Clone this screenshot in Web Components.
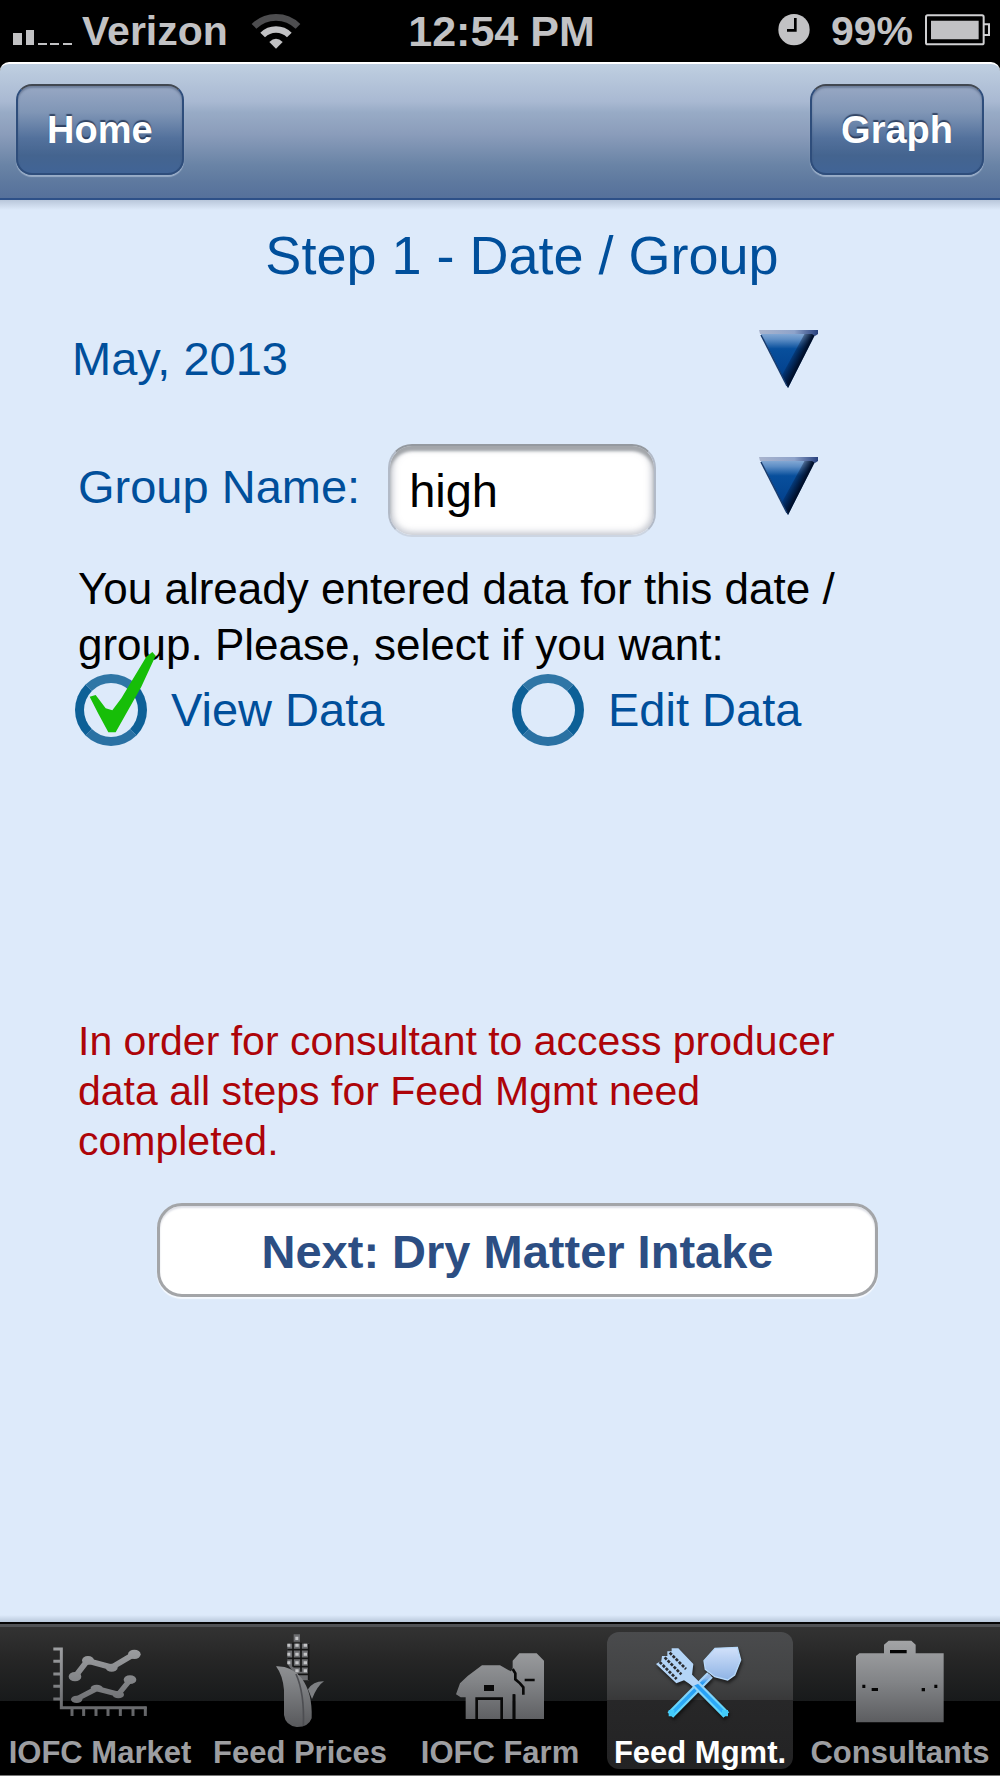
<!DOCTYPE html>
<html lang="en">
<head>
<meta charset="utf-8">
<meta name="viewport" content="width=device-width, initial-scale=1">
<title>Feed Mgmt.</title>
<style>
  html, body { margin: 0; background: #fff; }
  body { font-family: "Liberation Sans", Arial, Helvetica, sans-serif; }
</style>
</head>
<body>
<feed-app></feed-app>

<script>
const define = (name, html, setup) => {
  customElements.define(name, class extends HTMLElement {
    constructor() {
      super();
      this.attachShadow({ mode: "open" }).innerHTML = html;
    }
    connectedCallback() { if (setup) setup(this, this.shadowRoot); }
  });
};

define("status-bar", `
  <style>
    :host { display: grid; grid-template-columns: 1fr auto 1fr; align-items: center; background: #000; color: #c2c2c4; font-weight: 700; font-size: 41px; line-height: 62px; height: 62px; padding: 0 10px 0 13px; white-space: nowrap; }
    .side { display: flex; align-items: center; }
    .end { justify-content: flex-end; }
    .time { font-size: 43px; }
    .pct { margin: 0 12px 0 21px; }
    .carrier { margin: 0 23px 0 9px; }
    svg { display: block; height: 62px; flex: none; }
  </style>
  <div class="side">
    <svg width="60" viewBox="13 0 60 62" fill="#c2c2c4" aria-hidden="true"><path d="M13 33h9v12h-9zM26 30h8v15h-8zM38 43h9v2h-9zM50 43h9v2h-9zM63 43h9v2h-9z"/></svg>
    <span class="carrier">Verizon</span>
    <svg width="50" viewBox="750 0 150 186" aria-hidden="true"><path d="M759 79A94 94 0 0 1 891 79" fill="none" stroke="#4d4d4f" stroke-width="20"/><path d="M785 105A57 57 0 0 1 865 105" fill="none" stroke="#c2c2c4" stroke-width="20"/><path d="M805 126Q825 106 845 126L825 146z" fill="#c2c2c4"/></svg>
  </div>
  <span class="time">12:54 PM</span>
  <div class="side end">
    <svg width="32" viewBox="834 0 96 186" aria-hidden="true"><circle cx="882" cy="89" r="47" fill="#c2c2c4"/><path d="M886 54V91H861" fill="none" stroke="#000" stroke-width="8"/></svg>
    <span class="pct">99%</span>
    <svg width="65" viewBox="1275 0 195 186" aria-hidden="true"><rect x="1278" y="46" width="173" height="87" rx="5" fill="none" stroke="#d0d0d2" stroke-width="6"/><path d="M1293 62h143v56h-143z" fill="#c2c2c4"/><path d="M1452 73h15v32h-15" fill="none" stroke="#d0d0d2" stroke-width="6"/></svg>
  </div>`);

define("nav-button", `
  <style>
    :host { display: block; }
    button { display: block; height: 91px; padding: 1px 29px 0; border: 2px solid #2e4d7b; border-top-color: #414750; border-radius: 16px; color: #fff; font: 700 38px/86px "Liberation Sans", Arial, sans-serif; text-shadow: 0 -2px 1px rgba(30,45,75,.75); background: linear-gradient(#98a8c4, #8096b6 30%, #53719c 60%, #44648f 80%, #416496); box-shadow: 0 2px 1px rgba(190,205,225,.6), inset 0 2px 2px rgba(60,75,105,.45); }
  </style>
  <button type="button"><slot></slot></button>`);

define("nav-bar", `
  <style>
    :host { display: block; background: #000; }
    nav { box-sizing: border-box; height: 138px; display: flex; justify-content: space-between; align-items: flex-start; padding: 20px 16px 0; border-top: 2px solid #fff; border-bottom: 2px solid #2d5088; border-radius: 9px 9px 0 0; background: linear-gradient(#bfcfe1, #a9b9d2 28%, #98abc6 36%, #8b9dbb 52%, #6a84a6 75%, #5e799f 88%, #56719b); }
  </style>
  <nav><slot></slot></nav>`);

/* Glossy down-pointing arrow shared by both pickers */
const arrow = `<svg class="arrow" width="60" height="60" viewBox="0 0 60 60" aria-hidden="true">
  <defs>
    <linearGradient id="f" x1="0" y1="0" x2="0" y2="1"><stop offset="0" stop-color="#8fb0d8"/><stop offset=".13" stop-color="#5f8fc6"/><stop offset=".3" stop-color="#084f9c"/><stop offset="1" stop-color="#003a86"/></linearGradient>
    <linearGradient id="s" gradientUnits="userSpaceOnUse" x1="30" y1="26" x2="44" y2="33"><stop offset="0" stop-color="#001030" stop-opacity="0"/><stop offset=".8" stop-color="#00102c"/></linearGradient>
    <linearGradient id="e"><stop offset="0" stop-color="#a9b4cd"/><stop offset=".6" stop-color="#8ea3ca"/><stop offset="1" stop-color="#27407d"/></linearGradient>
  </defs>
  <path d="M1 3H57L29 59z" fill="url(#f)"/><path d="M46 4H57L29 59L23 46z" fill="url(#s)"/><path d="M2 6L28 57" stroke="#173a6c" stroke-width="1.5"/><path d="M0 1H59V5L56 7L53 5H1z" fill="url(#e)"/>
</svg>`;

define("date-picker", `
  <style>
    :host { display: flex; height: 84px; align-items: center; padding: 0 181px 0 72px; }
    select { appearance: none; flex: 1; min-width: 0; margin: 0; padding: 0; border: 0; background: none; color: #004f9b; font: 47px/60px "Liberation Sans", Arial, sans-serif; }
    .arrow { flex: none; pointer-events: none; margin-left: -60px; }
  </style>
  <select aria-label="Month"><option>May, 2013</option></select>${arrow}`);

define("group-field", `
  <style>
    :host { display: flex; align-items: flex-start; padding: 0 181px 0 78px; }
    label { color: #004f9b; font-size: 47px; line-height: 86px; white-space: nowrap; margin-right: 28px; }
    input { box-sizing: border-box; width: 268px; min-width: 0; height: 93px; margin: 0; padding: 0 19px; border: 2px solid; border-color: #94999f #b2bac7 #ccd5e2; border-radius: 24px; background: #fff; color: #000; font: 47px/60px "Liberation Sans", Arial, sans-serif; box-shadow: inset 0 5px 3px #a3a6aa, inset 0 0 6px 3px rgba(150,155,170,.55); }
    button { display: flex; align-items: center; height: 84px; margin: 0 0 0 auto; padding: 0; border: 0; background: none; }
  </style>
  <label for="group">Group Name:</label>
  <input id="group" type="text" value="high">
  <button type="button" aria-label="Choose group">${arrow}</button>`);

const tick = `<svg width="82" height="96" viewBox="226 295 246 288" aria-hidden="true"><path d="M270 435L288 430L318 470L338 476L365 440L440 315L458 301L468 312L425 405L348 542L326 542L296 486z" fill="#17be08"/></svg>`;

define("mode-choice", `
  <style>
    :host { display: grid; grid-template-columns: 1fr 1fr; padding: 0 51px 0 75px; }
    label { display: flex; align-items: center; gap: 24px; height: 74px; color: #004f9b; font-size: 47px; line-height: 60px; }
    .dot { position: relative; display: block; width: 72px; height: 72px; flex: none; }
    input { appearance: none; box-sizing: border-box; display: block; width: 72px; height: 72px; margin: 0; border: 9px solid; border-color: #2f76a6 #0d6097 #2a71a3; border-radius: 50%; }
    /* The tick rises out of the ring and over the text above it */
    svg { position: absolute; left: 0; bottom: 0; display: none; pointer-events: none; }
    input:checked + svg { display: block; }
  </style>
  <label><span class="dot"><input type="radio" name="mode" checked>${tick}</span>View Data</label>
  <label><span class="dot"><input type="radio" name="mode">${tick}</span>Edit Data</label>`);

define("next-button", `
  <style>
    :host { display: block; padding: 0 122px 0 157px; }
    button { display: block; width: 100%; height: 94px; margin: 0; padding: 4px 0 0; border: 3px solid #a3a5a8; border-radius: 25px; background: #fff; color: #2c4e83; font: 700 47px/84px "Liberation Sans", Arial, sans-serif; box-shadow: 0 2px 1px #f6faff, inset 0 2px 2px #dddfe6; }
  </style>
  <button type="button"><slot></slot></button>`);

const grey = `<linearGradient id="g" gradientUnits="userSpaceOnUse" x1="0" y1="110" x2="0" y2="380"><stop offset="0" stop-color="#a6a7a9"/><stop offset=".5" stop-color="#828487"/><stop offset="1" stop-color="#58595c"/></linearGradient>`;
const icons = {
  chart: ["150 96 300 300", `<g fill="none" stroke="url(#g)" stroke-width="9"><path d="M160 147H184V323H440"/><path d="M160 184H184M160 222H184M160 259H184M160 297H184"/><path d="M216 323V348M251 323V348M288 323V348M324 323V348M361 323V348M399 323V348M436 320V348"/><path d="M225 230L262 182L335 202L403 162" stroke-width="17"/><path d="M230 297L290 266L355 283L390 240" stroke-width="16"/></g><g fill="url(#g)"><ellipse cx="225" cy="230" rx="19" ry="14"/><ellipse cx="264" cy="181" rx="18" ry="13"/><ellipse cx="335" cy="203" rx="18" ry="12"/><ellipse cx="403" cy="163" rx="19" ry="14"/><ellipse cx="230" cy="298" rx="17" ry="11"/><ellipse cx="290" cy="264" rx="18" ry="10"/><ellipse cx="355" cy="284" rx="17" ry="11"/><ellipse cx="390" cy="239" rx="19" ry="13"/></g>`],
  corn: ["750 96 300 300", `<path d="M881 103h19v22h-19zM862 131h65v110h-30l-35-50z" fill="#6b6c6f"/><path d="M862 131h9v9h-9zM886 131h10v9h-10zM911 131h10v9h-10zM862 158h9v9h-9zM886 158h10v9h-10zM911 158h10v9h-10zM862 184h9v9h-9zM886 184h10v9h-10zM911 184h10v9h-10zM886 208h10v9h-10zM911 208h10v9h-10zM886 110h9v10h-9z" fill="#c3c4c6"/><path d="M879 128V200M903 128V215M926 132V240M862 149H927M862 175H927M880 200H927M893 223H925" stroke="#141414" stroke-width="5" fill="none"/><path d="M828 199Q875 197 905 235Q938 280 935 355Q925 382 890 381Q856 376 852 345V270Q848 225 828 199z" fill="url(#g)"/><path d="M888 222Q914 280 910 378" stroke="#4d4e52" stroke-width="5" fill="none"/><path d="M924 268Q940 243 972 244Q952 257 936 297z" fill="#7d7f82"/>`],
  farm: ["150 96 300 300", `<path d="M338 205V182L358 160H410L432 182V357H346V285L330 220z" fill="url(#g)"/><path d="M168 283L180 250L203 228L246 196H300L343 220L372 262V283H338V357H197V292H182z" fill="url(#g)"/><path d="M338 207L346 220V238L360 250L370 262V284M342 283V357M230 357V296H305V357M374 240H404" fill="none" stroke="#090909" stroke-width="8"/><path d="M252 255h30v18h-30z" fill="#090909"/>`],
  tools: ["150 96 300 300", `<defs><linearGradient id="b" gradientUnits="userSpaceOnUse" x1="0" y1="140" x2="0" y2="350"><stop offset="0" stop-color="#d3e2fb"/><stop offset=".45" stop-color="#92b6e6"/><stop offset=".52" stop-color="#249af5"/><stop offset="1" stop-color="#2fb4fb"/></linearGradient><linearGradient id="o" gradientUnits="userSpaceOnUse" x1="0" y1="140" x2="0" y2="350"><stop offset="0" stop-color="#d3e6fb"/><stop offset=".45" stop-color="#a6d2f8"/><stop offset="1" stop-color="#4fd6fb"/></linearGradient></defs><g filter="drop-shadow(3px 8px 5px rgba(0,0,0,.55))"><path d="M211 345L330 225" stroke="url(#o)" stroke-width="24"/><path d="M219 337L330 225" stroke="url(#b)" stroke-width="11"/><path d="M312 182L345 145L412 142L422 180L404 225L383 240L344 230L316 208z" fill="url(#b)" stroke="#b8d9fa" stroke-width="4"/><path d="M250 215L379 345" stroke="url(#o)" stroke-width="24"/><path d="M250 215L371 337" stroke="url(#b)" stroke-width="11"/><path d="M215 145L235 145L280 192L276 226L300 250L278 258L252 241L229 250L168 192L184 182L186 168L202 168L202 154L215 154z" fill="#b4d5f7"/><path d="M179 186L230 237M194 172L244 223M209 158L258 207" stroke="#2b2d31" stroke-width="8" stroke-dasharray="9 4"/></g><path d="M206 330h17v19h-17zM366 330h18v19h-18z" fill="#42cbfa"/>`],
  briefcase: ["750 96 300 300", `<path d="M768 168L778 160H852V134L866 122H934L947 134V160H1031V367H768z" fill="url(#g)"/><path d="M870 150h50v10h-50zM787 254h9v10h-9zM815 264h19v9h-19zM965 264h10v10h-10zM1003 254h9v10h-9z" fill="#050505"/>`]
};

define("tab-item", `
  <style>
    :host { display: block; flex: 1 1 0; min-width: 0; }
    a { display: flex; flex-direction: column; align-items: center; gap: 3px; height: 137px; margin: 0 7px; border-radius: 12px; color: #9d9ea1; text-decoration: none; font-weight: 700; font-size: 31px; line-height: 34px; white-space: nowrap; }
    span { padding-top: 1px; }
    :host([selected]) a { color: #fff; background: linear-gradient(#4a4b4d, #424344 35%, #383839 50%, #272728 50%, #232324); }
    svg { display: block; flex: none; }
  </style>
  <a href="#"><svg width="100" height="100" aria-hidden="true"></svg><span><slot></slot></span></a>`,
  (host, root) => {
    const [box, art] = icons[host.getAttribute("icon")];
    const svg = root.querySelector("svg");
    svg.setAttribute("viewBox", box);
    svg.innerHTML = `<defs>${grey}</defs>` + art;
    if (host.hasAttribute("selected")) root.querySelector("a").setAttribute("aria-current", "page");
  });

define("tab-bar", `
  <style>
    :host { display: block; }
    nav { display: flex; padding: 8px 0 6px; border-top: 2px solid #050505; border-bottom: 1px solid #777; background: linear-gradient(#505255 0 3px, #333 3px, #262626 35px, #181a1b 77px, #000 77px); }
  </style>
  <nav><slot></slot></nav>`);

define("feed-app", `
  <style>
    :host { display: flex; flex-direction: column; box-sizing: border-box; min-height: 100vh; padding-bottom: 2px; }
    main { flex: 1; display: flex; flex-direction: column; background: linear-gradient(#b9c7da, #ddeafa 10px calc(100% - 7px), #b9c8db); }
    h1 { margin: 23px 0 30px; padding-left: 44px; text-align: center; color: #004f9b; font-weight: 400; font-size: 54px; line-height: 64px; }
    group-field { margin-top: 43px; }
    p { margin: 0; padding: 0 130px 0 78px; }
    .info { margin-top: 24px; font-size: 44px; line-height: 56px; }
    .notice { margin: 269px 0 37px; color: #ad0409; font-size: 41px; line-height: 50px; }
  </style>
  <status-bar></status-bar>
  <nav-bar><nav-button>Home</nav-button><nav-button>Graph</nav-button></nav-bar>
  <main>
    <h1>Step 1 - Date / Group</h1>
    <date-picker></date-picker>
    <group-field></group-field>
    <p class="info">You already entered data for this date / group. Please, select if you want:</p>
    <mode-choice></mode-choice>
    <p class="notice">In order for consultant to access producer data all steps for Feed Mgmt need completed.</p>
    <next-button>Next: Dry Matter Intake</next-button>
  </main>
  <tab-bar>
    <tab-item icon="chart">IOFC Market</tab-item>
    <tab-item icon="corn">Feed Prices</tab-item>
    <tab-item icon="farm">IOFC Farm</tab-item>
    <tab-item icon="tools" selected>Feed Mgmt.</tab-item>
    <tab-item icon="briefcase">Consultants</tab-item>
  </tab-bar>`);
</script>
</body>
</html>
